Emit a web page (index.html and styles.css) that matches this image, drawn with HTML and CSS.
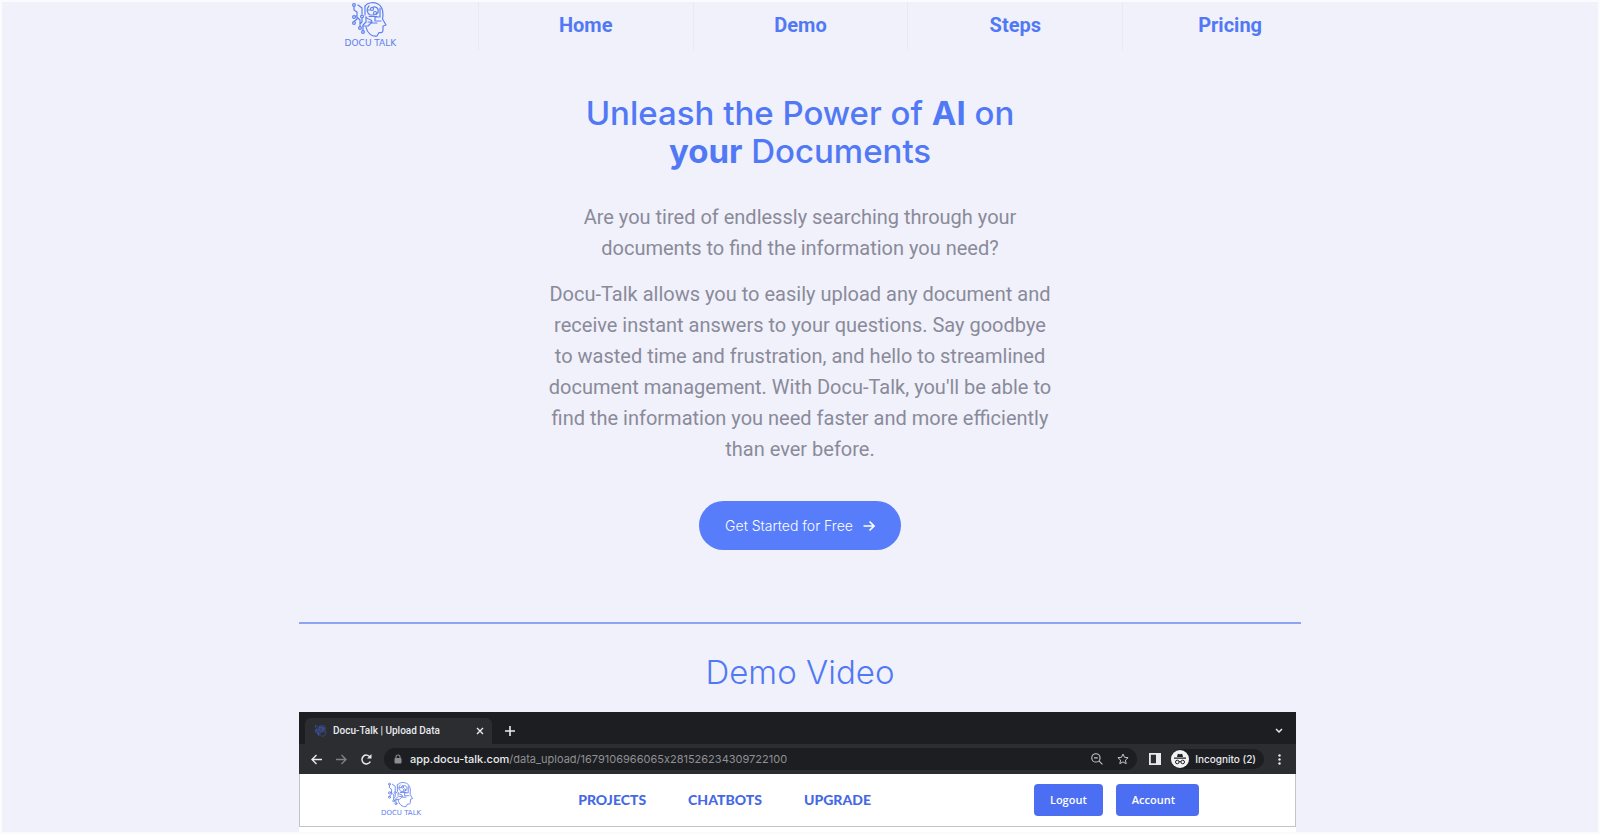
FILE: index.html
```html
<!DOCTYPE html>
<html lang="en">
<head>
<meta charset="utf-8">
<title>Docu-Talk</title>
<link rel="stylesheet" href="styles.css">
</head>
<body>
<svg class="symbols" aria-hidden="true">
  <symbol id="head" viewBox="0 0 36 36">
    <g fill="none" stroke="currentColor" stroke-width="1.200" stroke-linejoin="round" stroke-linecap="round">
      <path d="M13 4C16 0 22 0 26 2c4 2 5 6 5 11l-.5 4L34 23l-3 1v4c0 2-1 3-4 2.500L25 34c-5 1-10-3-11-9"/>
      <path d="M2 4.500V8l3 2v7l-3 2.500M3.500 14H5M6 3l4 3v6M8 24.500V18l-2-2M11 28.500V23l3-3v-5M10 16.500V20l-2 2M13 4v9"/>
      <path d="M15 8h3M17 4c-3 3-2 7 1 9h4M14 15c3 4 6 1 6 5h-4M20 5.500c4-2 7 1 6 5l-2 2M28 6v9h-5v4h6M17 14.500h8M11 24h5l3-3h6"/>
      <circle cx="2" cy="3" r="1.400"/><circle cx="2" cy="15" r="1.400"/><circle cx="2" cy="21" r="1.400"/><circle cx="10" cy="14.500" r="1.400"/>
      <circle cx="8" cy="26" r="1.400"/><circle cx="11" cy="30" r="1.400"/><circle cx="20" cy="7" r="1.500"/><circle cx="23" cy="11" r="1.500"/>
    </g>
  </symbol>
</svg>
<div class="page">
  <nav class="site-nav">
    <a class="brand" href="#"><svg class="brand-mark"><use href="#head"/></svg><span class="brand-name">DOCU TALK</span></a>
    <a href="#">Home</a>
    <a href="#">Demo</a>
    <a href="#">Steps</a>
    <a href="#">Pricing</a>
  </nav>
  <main class="content">
    <section class="hero">
      <h1>Unleash the Power of <b>AI</b> on<br><b>your</b> Documents</h1>
      <p>Are you tired of endlessly searching through your<br>documents to find the information you need?</p>
      <p>Docu-Talk allows you to easily upload any document and<br>receive instant answers to your questions. Say goodbye<br>to wasted time and frustration, and hello to streamlined<br>document management. With Docu-Talk, you'll be able to<br>find the information you need faster and more efficiently<br>than ever before.</p>
      <button class="cta" type="button">Get Started for Free
        <svg width="12" height="12" viewBox="0 0 12 12" fill="none" stroke="currentColor" stroke-width="1.6"><path d="M0.500 6h10M6.500 1.500L11 6l-4.500 4.500"/></svg>
      </button>
    </section>
    <section class="demo">
      <h2>Demo Video</h2>
      <div class="video">
        <div class="tabs">
          <div class="tab">
            <svg class="favicon"><use href="#head"/></svg>
            <span>Docu-Talk | Upload Data</span>
            <svg class="close" width="8" height="8" viewBox="0 0 8 8" stroke="currentColor" stroke-width="1.4"><path d="M1 1l6 6M7 1L1 7"/></svg>
          </div>
          <svg class="plus" width="10" height="10" viewBox="0 0 10 10" stroke="currentColor" stroke-width="1.6"><path d="M5 0v10M0 5h10"/></svg>
          <svg class="chevron" width="8" height="6" viewBox="0 0 8 6" fill="none" stroke="currentColor" stroke-width="1.5"><path d="M1 1l3 3 3-3"/></svg>
        </div>
        <div class="toolbar">
          <svg width="11" height="11" viewBox="0 0 11 11" fill="none" stroke="currentColor" stroke-width="1.4"><path d="M11 5.500H1M5.500 1L1 5.500 5.500 10"/></svg>
          <svg class="dim" width="11" height="11" viewBox="0 0 11 11" fill="none" stroke="currentColor" stroke-width="1.300"><path d="M0 5.500h10M5.500 1L10 5.500 5.500 10"/></svg>
          <svg width="11" height="11" viewBox="0 0 11 11" fill="none" stroke="currentColor" stroke-width="1.500"><path d="M9.300 7.500A4.400 4.400 0 1 1 9 3"/><path d="M10.500 0v4.500H6z" fill="currentColor" stroke="none"/></svg>
          <div class="address">
            <svg class="lock" width="8" height="10" viewBox="0 0 8 10"><rect x="0.500" y="4" width="7" height="5.500" rx="1" fill="currentColor"/><path d="M2 4.500V3a2 2 0 0 1 4 0v1.500" fill="none" stroke="currentColor" stroke-width="1.100"/></svg>
            <span class="url"><b>app.docu-talk.com</b>/data_upload/1679106966065x281526234309722100</span>
            <svg width="12" height="12" viewBox="0 0 11 11" fill="none" stroke="currentColor"><circle cx="4.500" cy="4.500" r="3.800"/><path d="M7.300 7.300L10.500 10.500M2.800 4.500h3.400"/></svg>
            <svg width="12" height="12" viewBox="0 0 12 12" fill="none" stroke="currentColor"><path d="M6 1l1.500 3.300 3.600.4-2.700 2.400.8 3.600L6 8.900l-3.200 1.800.8-3.600L.9 4.700l3.600-.4z"/></svg>
          </div>
          <svg width="12" height="12" viewBox="0 0 12 12"><path fill="currentColor" fill-rule="evenodd" d="M0 0h12v12H0zM1.800 1.800v8.400H7V1.800z"/></svg>
          <div class="incognito">
            <svg width="18" height="18" viewBox="0 0 18 18"><circle cx="9" cy="9" r="9" fill="#f1f3f4"/><path d="M6 7l.8-3.300 2.200.5 2.200-.5L12 7zM3 7.500h12v1.200H3z" fill="#202124"/><g fill="none" stroke="#202124"><circle cx="6.300" cy="12" r="1.800"/><circle cx="11.700" cy="12" r="1.800"/><path d="M8 11.700h2"/></g></svg>
            <span>Incognito (2)</span>
          </div>
          <svg width="3" height="11" viewBox="0 0 3 11" fill="currentColor"><circle cx="1.500" cy="1.500" r="1.200"/><circle cx="1.500" cy="5.500" r="1.200"/><circle cx="1.500" cy="9.500" r="1.200"/></svg>
        </div>
        <div class="app-bar">
          <a class="brand small" href="#"><svg class="brand-mark"><use href="#head"/></svg><span class="brand-name">DOCU TALK</span></a>
          <div class="app-links"><a href="#">PROJECTS</a><a href="#">CHATBOTS</a><a href="#">UPGRADE</a></div>
          <div class="app-actions"><button type="button">Logout</button><button class="account" type="button">Account</button></div>
        </div>
        <div class="app-body"></div>
      </div>
    </section>
  </main>
</div>
</body>
</html>
```
FILE: styles.css
```css
* { box-sizing: border-box; }
body { margin: 0; background: #f0f1fa; font-family: Roboto, sans-serif; color: #8a8a9a; }
a { color: inherit; text-decoration: none; }
svg { flex: none; display: block; }
.symbols { position: absolute; width: 0; height: 0; }
.page { height: 100vh; overflow: hidden; border: 2px solid #fafbfe; }

.site-nav { display: grid; grid-template-columns: repeat(5, 1fr); max-width: 1074px; height: 48px; margin: 0 auto; }
.site-nav a { display: flex; align-items: center; justify-content: center; padding-bottom: 2px; color: #5279f5; font-size: 20px; font-weight: 700; }
.site-nav a + a { border-left: 1px solid #e7e9f3; }
.site-nav .brand, .brand { display: flex; flex-direction: column; align-items: center; justify-content: flex-start; color: #5f80ee; }
.brand-mark { width: 36px; height: 36px; }
.brand-name { font: 400 9px/10px "DejaVu Sans", sans-serif; }

.content { max-width: 1002px; margin: 0 auto; }
.hero { display: flex; flex-direction: column; align-items: center; padding: 44px 0 72px; border-bottom: 2px solid #8ba4f3; text-align: center; }
h1 { margin: 0 0 32px; color: #5279f5; font: 500 33px/38px Inter, sans-serif; }
h1 b { font-weight: 700; }
.hero p { margin: 0 0 15px; font-size: 20px; line-height: 31px; }
.cta { display: flex; align-items: center; justify-content: center; gap: 10px; height: 49px; margin-top: 21px; padding: 0 26px; border: 0; border-radius: 25px; background: #577dfb; color: #fff; font: 300 14px/20px Inter, sans-serif; }

h2 { margin: 0; padding: 28px 0 20px; color: #5279f5; font: 300 33px/40px Inter, sans-serif; text-align: center; }
.video { margin-right: 5px; background: #fff; color: #e8eaed; font: 500 11px/14px Inter, sans-serif; font-feature-settings: "calt" 0; }
.tabs { display: flex; align-items: center; height: 32px; padding: 6px 13px 0 6px; background: #1d1e21; }
.tab { display: flex; align-items: center; gap: 6px; width: 187px; height: 26px; padding: 0 8px 0 10px; border-radius: 6px 6px 0 0; background: #2c2d31; font-family: Roboto, sans-serif; font-size: 10px; }
.favicon { width: 12px; height: 12px; color: #4668d8; }
.close, .chevron { margin-left: auto; }
.plus { margin-left: 13px; }
.toolbar { display: flex; align-items: center; gap: 14px; height: 30px; padding: 0 15px 0 12px; background: #2c2d31; }
.dim { color: #808186; }
.address { display: flex; flex: 1; align-items: center; gap: 14px; height: 22px; margin-right: -2px; margin-left: -2px; padding: 0 8px 0 10px; border-radius: 11px; background: #1d1e21; color: #c4c5c9; }
.lock { color: #8c8d92; }
.url { flex: 1; margin-left: -6px; color: #8f9095; font-weight: 400; }
.url b { color: #e8eaed; font-weight: 500; }
.incognito { display: flex; align-items: center; gap: 6px; height: 20px; margin-left: -4px; padding-right: 8px; border-radius: 10px; background: #1d1e21; font-size: 10px; }
.app-bar { display: flex; align-items: center; height: 53px; padding: 0 96px 0 81px; border: 1px solid #c3c4c8; border-top: 0; }
.small .brand-mark { width: 26px; height: 26px; }
.small .brand-name { font-size: 7px; }
.app-links { display: flex; gap: 42px; margin-left: 157px; color: #4569e3; font: 900 14px/18px Lato, sans-serif; }
.app-actions { display: flex; gap: 13px; margin-left: auto; }
.app-actions button { height: 32px; padding: 0 16px; border: 0; border-radius: 4px; background: #4b6ef2; color: #fff; font: 600 11px/16px "Open Sans", sans-serif; }
.app-actions .account { padding-right: 24px; }
.app-body { height: 520px; }
```
